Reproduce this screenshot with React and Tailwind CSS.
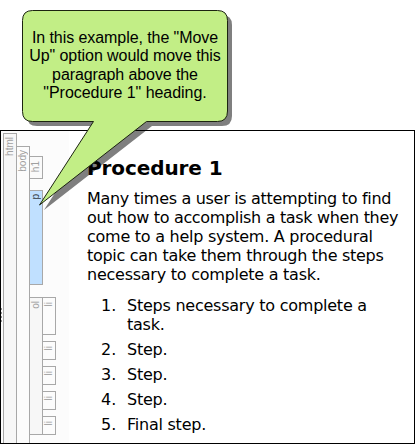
const paragraph = [
  { text: "Many times a user is attempting to find", cls: "tracking-[-0.31px]" },
  { text: "out how to accomplish a task when they", cls: "tracking-[-0.33px]" },
  { text: "come to a help system. A procedural", cls: "tracking-[-0.26px]" },
  { text: "topic can take them through the steps", cls: "tracking-[-0.29px]" },
  { text: "necessary to complete a task.", cls: "tracking-[-0.25px]" },
];

const steps = [
  ["Steps necessary to complete a", "task."],
  ["Step."],
  ["Step."],
  ["Step."],
  ["Final step."],
];

function Tag({ children, tone = "text-[#a0a0a0]" }) {
  return (
    <span className={`block rotate-180 self-start text-[10px] leading-[12px] [writing-mode:vertical-rl] ${tone}`}>
      {children}
    </span>
  );
}

function StructureBars() {
  return (
    <div className="flex w-[68px] shrink-0 bg-[#fcfcfc] pl-[2px] pt-[2px] font-['Liberation_Sans',sans-serif]">
      <div className="flex w-[14px] justify-center border-x border-t border-[#a8a8a8] bg-[#f7f7f7] pt-[3px]">
        <Tag>html</Tag>
      </div>
      <div className="mt-[13px] flex w-[13px] justify-center border-r border-t border-[#a8a8a8] pt-[3px]">
        <Tag>body</Tag>
      </div>
      <div className="w-[13px] pt-[23px]">
        <div className="flex h-[23px] justify-center border-y border-r border-[#a8a8a8] bg-[#fafafa] pt-[4px]">
          <Tag>h1</Tag>
        </div>
        <div className="mt-[11px] flex h-[95px] justify-center border-y border-r border-[#a8a8a8] bg-[#c0e0ff] pt-[3px]">
          <Tag tone="text-[#303840]">p</Tag>
        </div>
        <div className="mt-[12px] flex h-[138px] justify-center border-y border-r border-[#a8a8a8] bg-[#f7f7f7] pt-[3px]">
          <Tag>ol</Tag>
        </div>
      </div>
      <div className="flex w-[13px] flex-col gap-[6px] pt-[164px]">
        {steps.map((s, i) => (
          <div
            key={i}
            className={`flex justify-center border-y border-r border-[#a8a8a8] pt-[4px] ${s.length > 1 ? "h-[38px]" : "h-[19px]"}`}
          >
            <Tag>li</Tag>
          </div>
        ))}
      </div>
    </div>
  );
}

function Callout() {
  return (
    <div className="absolute left-0 top-0 h-[220px] w-[240px]">
      <svg className="absolute inset-0" width="240" height="220" viewBox="0 0 240 220">
        <path
          transform="translate(5 5)"
          d="M32 10H217Q227 10 227 20V111Q227 121 217 121H147L39 205L93 121H32Q22 121 22 111V20Q22 10 32 10Z"
          fill="#000"
          fillOpacity="0.5"
        />
        <path
          d="M32.5 10.5H217.5Q227.500 10.500 227.500 20.500V111Q227.500 121.500 217.500 121.500H146.500L39.500 205L93.500 121.500H32.500Q22.500 121.500 22.500 111.500V20.500Q22.500 10.500 32.500 10.500Z"
          fill="#c2ee86"
          stroke="#1c2410"
        />
      </svg>
      <div className="relative ml-[22px] mt-[29px] w-[206px] text-center font-['Liberation_Sans',Arial,sans-serif] text-[16px] leading-[18.4px] text-black">
        <div className="tracking-[-0.07px]">In this example, the "Move</div>
        <div className="tracking-[-0.07px]">Up" option would move this</div>
        <div className="tracking-[-0.1px]">paragraph above the</div>
        <div className="tracking-[-0.05px]">"Procedure 1" heading.</div>
      </div>
    </div>
  );
}

export default function App() {
  return (
    <div className="relative h-[444px] w-[415px] overflow-hidden bg-white pt-[130px]">
      <div className="relative flex h-[314px] border border-black bg-white">
        <StructureBars />
        <div className="pl-[18px] pt-[25px] font-['DejaVu_Sans',Verdana,sans-serif] text-[16px] leading-[19px] whitespace-nowrap text-black">
          <h1 className="text-[20px] font-bold leading-[24px] tracking-[-0.1px]">Procedure 1</h1>
          <div className="mt-[9px]">
            {paragraph.map((l) => (
              <div key={l.text} className={l.cls}>{l.text}</div>
            ))}
          </div>
          <ol className="mt-[12px] flex flex-col gap-[6px] pl-[14px]">
            {steps.map((lines, i) => (
              <li key={i} className="flex">
                <span className="w-[26px]">{i + 1}.</span>
                <div className="tracking-[-0.24px]">
                  {lines.map((t) => (
                    <div key={t}>{t}</div>
                  ))}
                </div>
              </li>
            ))}
          </ol>
        </div>
        {/* splitter grip */}
        <div className="absolute left-0 top-[177px] flex flex-col gap-[2px]">
          <i className="h-[2px] w-px bg-[#909090]" />
          <i className="h-[2px] w-px bg-[#909090]" />
          <i className="h-[2px] w-px bg-[#909090]" />
          <i className="h-[2px] w-px bg-[#909090]" />
        </div>
      </div>
      <Callout />
    </div>
  );
}
